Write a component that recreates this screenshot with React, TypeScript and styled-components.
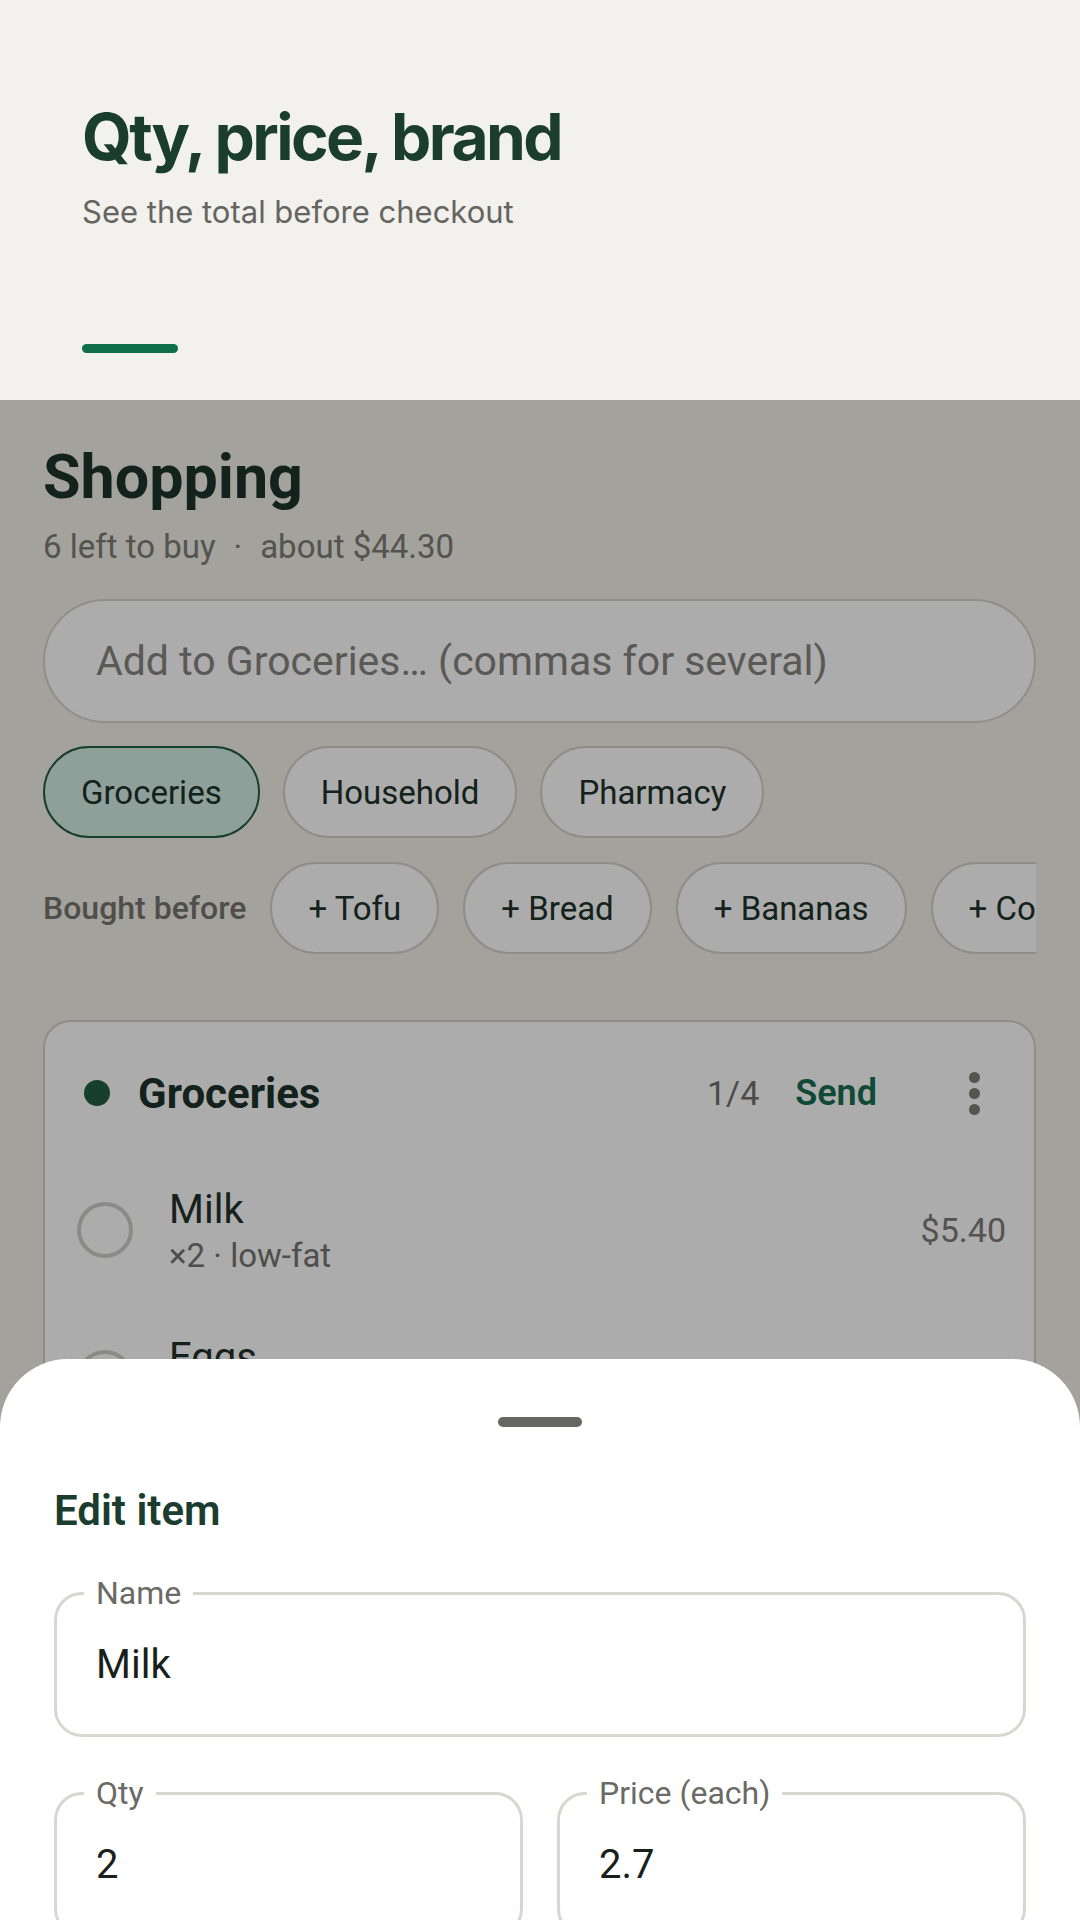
import styled, { createGlobalStyle } from 'styled-components';

const GlobalStyle = createGlobalStyle`
    html, body {
        margin: 0;
        padding: 0;
        background: #f2f1ed;
    }
    * {
        box-sizing: border-box;
    }
    body {
        font-family: Roboto, "Liberation Sans", Arial, sans-serif;
    }
`;

const Frame = styled.div`
    width: 1080px;
    height: 1920px;
    display: flex;
    flex-direction: column;
    overflow: hidden;
`;

// caption above the phone screen
const Caption = styled.header`
    height: 400px;
    flex-shrink: 0;
    background: #f2f1ed;
    padding: 98px 82px 0;
    display: flex;
    flex-direction: column;
    font-family: Inter, "Liberation Sans", sans-serif;
`;

const CaptionTitle = styled.h1`
    margin: 0;
    font-size: 64px;
    font-weight: 700;
    line-height: 77px;
    letter-spacing: -0.04em;
    color: #1a3d30;
`;

const CaptionSub = styled.p`
    margin: 17px 0 0;
    font-size: 31px;
    line-height: 39px;
    color: #65645f;
`;

const AccentBar = styled.div`
    margin-top: 113px;
    width: 96px;
    height: 9px;
    border-radius: 5px;
    background: #0f6e4b;
`;

const Screen = styled.main`
    flex: 1;
    position: relative;
    overflow: hidden;
    background: #f2f0e8;
`;

const Content = styled.div`
    padding: 41px 44px 0 43px;
    display: flex;
    flex-direction: column;
`;

const PageTitle = styled.h2`
    margin: 0;
    font-size: 61px;
    font-weight: 700;
    line-height: 72px;
    color: #1d332a;
`;

const Summary = styled.div`
    margin-top: 14px;
    font-size: 33px;
    line-height: 39px;
    color: #7e7c75;
    span {
        margin: 0 18px;
    }
`;

const AddInput = styled.input`
    margin-top: 33px;
    height: 124px;
    width: 100%;
    border: 2px solid #d4d3cb;
    border-radius: 62px;
    padding: 0 51px;
    background: #fff;
    font-family: inherit;
    font-size: 41px;
    color: #1d332a;
    outline: none;
    &::placeholder {
        color: #86847e;
    }
`;

const ChipRow = styled.div`
    margin-top: 23px;
    display: flex;
    gap: 23px;
`;

const Chip = styled.button<{ $active?: boolean }>`
    flex-shrink: 0;
    height: 92px;
    padding: 0 36px;
    border: 2px solid ${(p) => (p.$active ? '#245c48' : '#d3d1ca')};
    background: ${(p) => (p.$active ? '#d4ede4' : '#fff')};
    border-radius: 46px;
    font-family: inherit;
    font-size: 33px;
    color: #1d332a;
    white-space: nowrap;
`;

const SuggestRow = styled.div`
    margin-top: 24px;
    display: flex;
    align-items: center;
    gap: 24px;
    overflow: hidden;
    white-space: nowrap;
`;

const SuggestLabel = styled.span`
    flex-shrink: 0;
    font-size: 32px;
    font-weight: 500;
    color: #75746e;
`;

const Card = styled.section`
    margin-top: 66px;
    background: #fff;
    border: 2px solid #d3d1ca;
    border-radius: 28px;
    padding: 0 28px 0 32px;
`;

const CardHeader = styled.div`
    height: 134px;
    padding-top: 8px;
    display: flex;
    align-items: center;
`;

const ListDot = styled.span`
    width: 26px;
    height: 26px;
    border-radius: 50%;
    background: #245c48;
    margin: 0 28px 0 7px;
`;

const CardTitle = styled.h3`
    flex: 1;
    margin: 0;
    font-size: 42px;
    font-weight: 700;
    color: #1d332a;
`;

const Count = styled.span`
    font-size: 34px;
    color: #71706a;
`;

const SendBtn = styled.span`
    margin-left: 36px;
    font-size: 36px;
    font-weight: 600;
    color: #166e4f;
`;

const Kebab = styled.svg`
    margin: 0 26px 0 92px;
`;

const ItemRow = styled.div`
    height: 148px;
    display: flex;
    align-items: center;
`;

const Check = styled.span`
    width: 56px;
    height: 56px;
    border: 4px solid #cdcdc7;
    border-radius: 50%;
    margin-right: 36px;
    flex-shrink: 0;
`;

const ItemText = styled.div`
    flex: 1;
`;

const ItemName = styled.div`
    font-size: 40px;
    line-height: 48px;
    color: #22322b;
`;

const ItemMeta = styled.div`
    margin-top: 4px;
    font-size: 33px;
    line-height: 36px;
    color: #75746e;
`;

const Price = styled.span`
    font-size: 34px;
    color: #7d7b75;
`;

const Scrim = styled.div`
    position: absolute;
    inset: 0;
    background: rgba(0, 0, 0, 0.325);
    z-index: 1;
`;

const Sheet = styled.div`
    position: absolute;
    left: 0;
    right: 0;
    top: 959px;
    min-height: 1000px;
    z-index: 2;
    background: #fff;
    border-radius: 68px 68px 0 0;
    padding: 58px 54px 0;
    display: flex;
    flex-direction: column;
    & > * {
        flex-shrink: 0;
    }
`;

const Handle = styled.div`
    align-self: center;
    width: 84px;
    height: 10px;
    border-radius: 5px;
    background: #666663;
`;

const SheetTitle = styled.h3`
    margin: 59px 0 0;
    font-size: 42px;
    font-weight: 600;
    line-height: 50px;
    color: #1b3d30;
`;

const Field = styled.div<{ $gap?: number }>`
    margin-top: ${(p) => p.$gap ?? 0}px;
    position: relative;
    height: 145px;
    border: 3px solid #d9d6cf;
    border-radius: 28px;
    padding: 0 39px;
    display: flex;
    align-items: center;
`;

const FieldLabel = styled.span`
    position: absolute;
    top: -21px;
    left: 27px;
    padding: 0 12px;
    background: #fff;
    font-size: 32px;
    line-height: 38px;
    color: #6b6a66;
`;

const FieldValue = styled.span`
    font-size: 40px;
    color: #1a1f1c;
`;

const FieldRow = styled.div`
    margin-top: 55px;
    display: grid;
    grid-template-columns: 1fr 1fr;
    gap: 34px;
`;

const lists = ['Groceries', 'Household', 'Pharmacy'];
const suggestions = ['Tofu', 'Bread', 'Bananas', 'Coffee', 'Rice'];

const items = [
    { name: 'Milk', meta: '×2 · low-fat', price: '$5.40' },
    { name: 'Eggs', meta: '×12 · free-range', price: '$4.20' },
    { name: 'Apples', meta: '×6', price: '$3.90' },
];

function App() {
    return (
        <Frame>
            <GlobalStyle />
            <Caption>
                <CaptionTitle>Qty, price, brand</CaptionTitle>
                <CaptionSub>See the total before checkout</CaptionSub>
                <AccentBar />
            </Caption>

            <Screen>
                <Content>
                    <PageTitle>Shopping</PageTitle>
                    <Summary>
                        6 left to buy<span>·</span>about $44.30
                    </Summary>
                    <AddInput readOnly placeholder="Add to Groceries… (commas for several)" />

                    <ChipRow>
                        {lists.map((l, i) => (
                            <Chip key={l} $active={i === 0}>{l}</Chip>
                        ))}
                    </ChipRow>

                    <SuggestRow>
                        <SuggestLabel>Bought before</SuggestLabel>
                        {suggestions.map((s) => (
                            <Chip key={s}>+ {s}</Chip>
                        ))}
                    </SuggestRow>

                    <Card>
                        <CardHeader>
                            <ListDot />
                            <CardTitle>Groceries</CardTitle>
                            <Count>1/4</Count>
                            <SendBtn>Send</SendBtn>
                            <Kebab width="11" height="43" viewBox="0 0 11 43">
                                <circle cx="5.5" cy="5.5" r="5.5" fill="#7f7e76" />
                                <circle cx="5.5" cy="21.5" r="5.5" fill="#7f7e76" />
                                <circle cx="5.5" cy="37.5" r="5.5" fill="#7f7e76" />
                            </Kebab>
                        </CardHeader>
                        {items.map((it) => (
                            <ItemRow key={it.name}>
                                <Check />
                                <ItemText>
                                    <ItemName>{it.name}</ItemName>
                                    <ItemMeta>{it.meta}</ItemMeta>
                                </ItemText>
                                <Price>{it.price}</Price>
                            </ItemRow>
                        ))}
                    </Card>
                </Content>

                <Scrim />

                <Sheet>
                    <Handle />
                    <SheetTitle>Edit item</SheetTitle>
                    <Field $gap={56}>
                        <FieldLabel>Name</FieldLabel>
                        <FieldValue>Milk</FieldValue>
                    </Field>
                    <FieldRow>
                        <Field>
                            <FieldLabel>Qty</FieldLabel>
                            <FieldValue>2</FieldValue>
                        </Field>
                        <Field>
                            <FieldLabel>Price (each)</FieldLabel>
                            <FieldValue>2.7</FieldValue>
                        </Field>
                    </FieldRow>
                </Sheet>
            </Screen>
        </Frame>
    );
}

export default App;
